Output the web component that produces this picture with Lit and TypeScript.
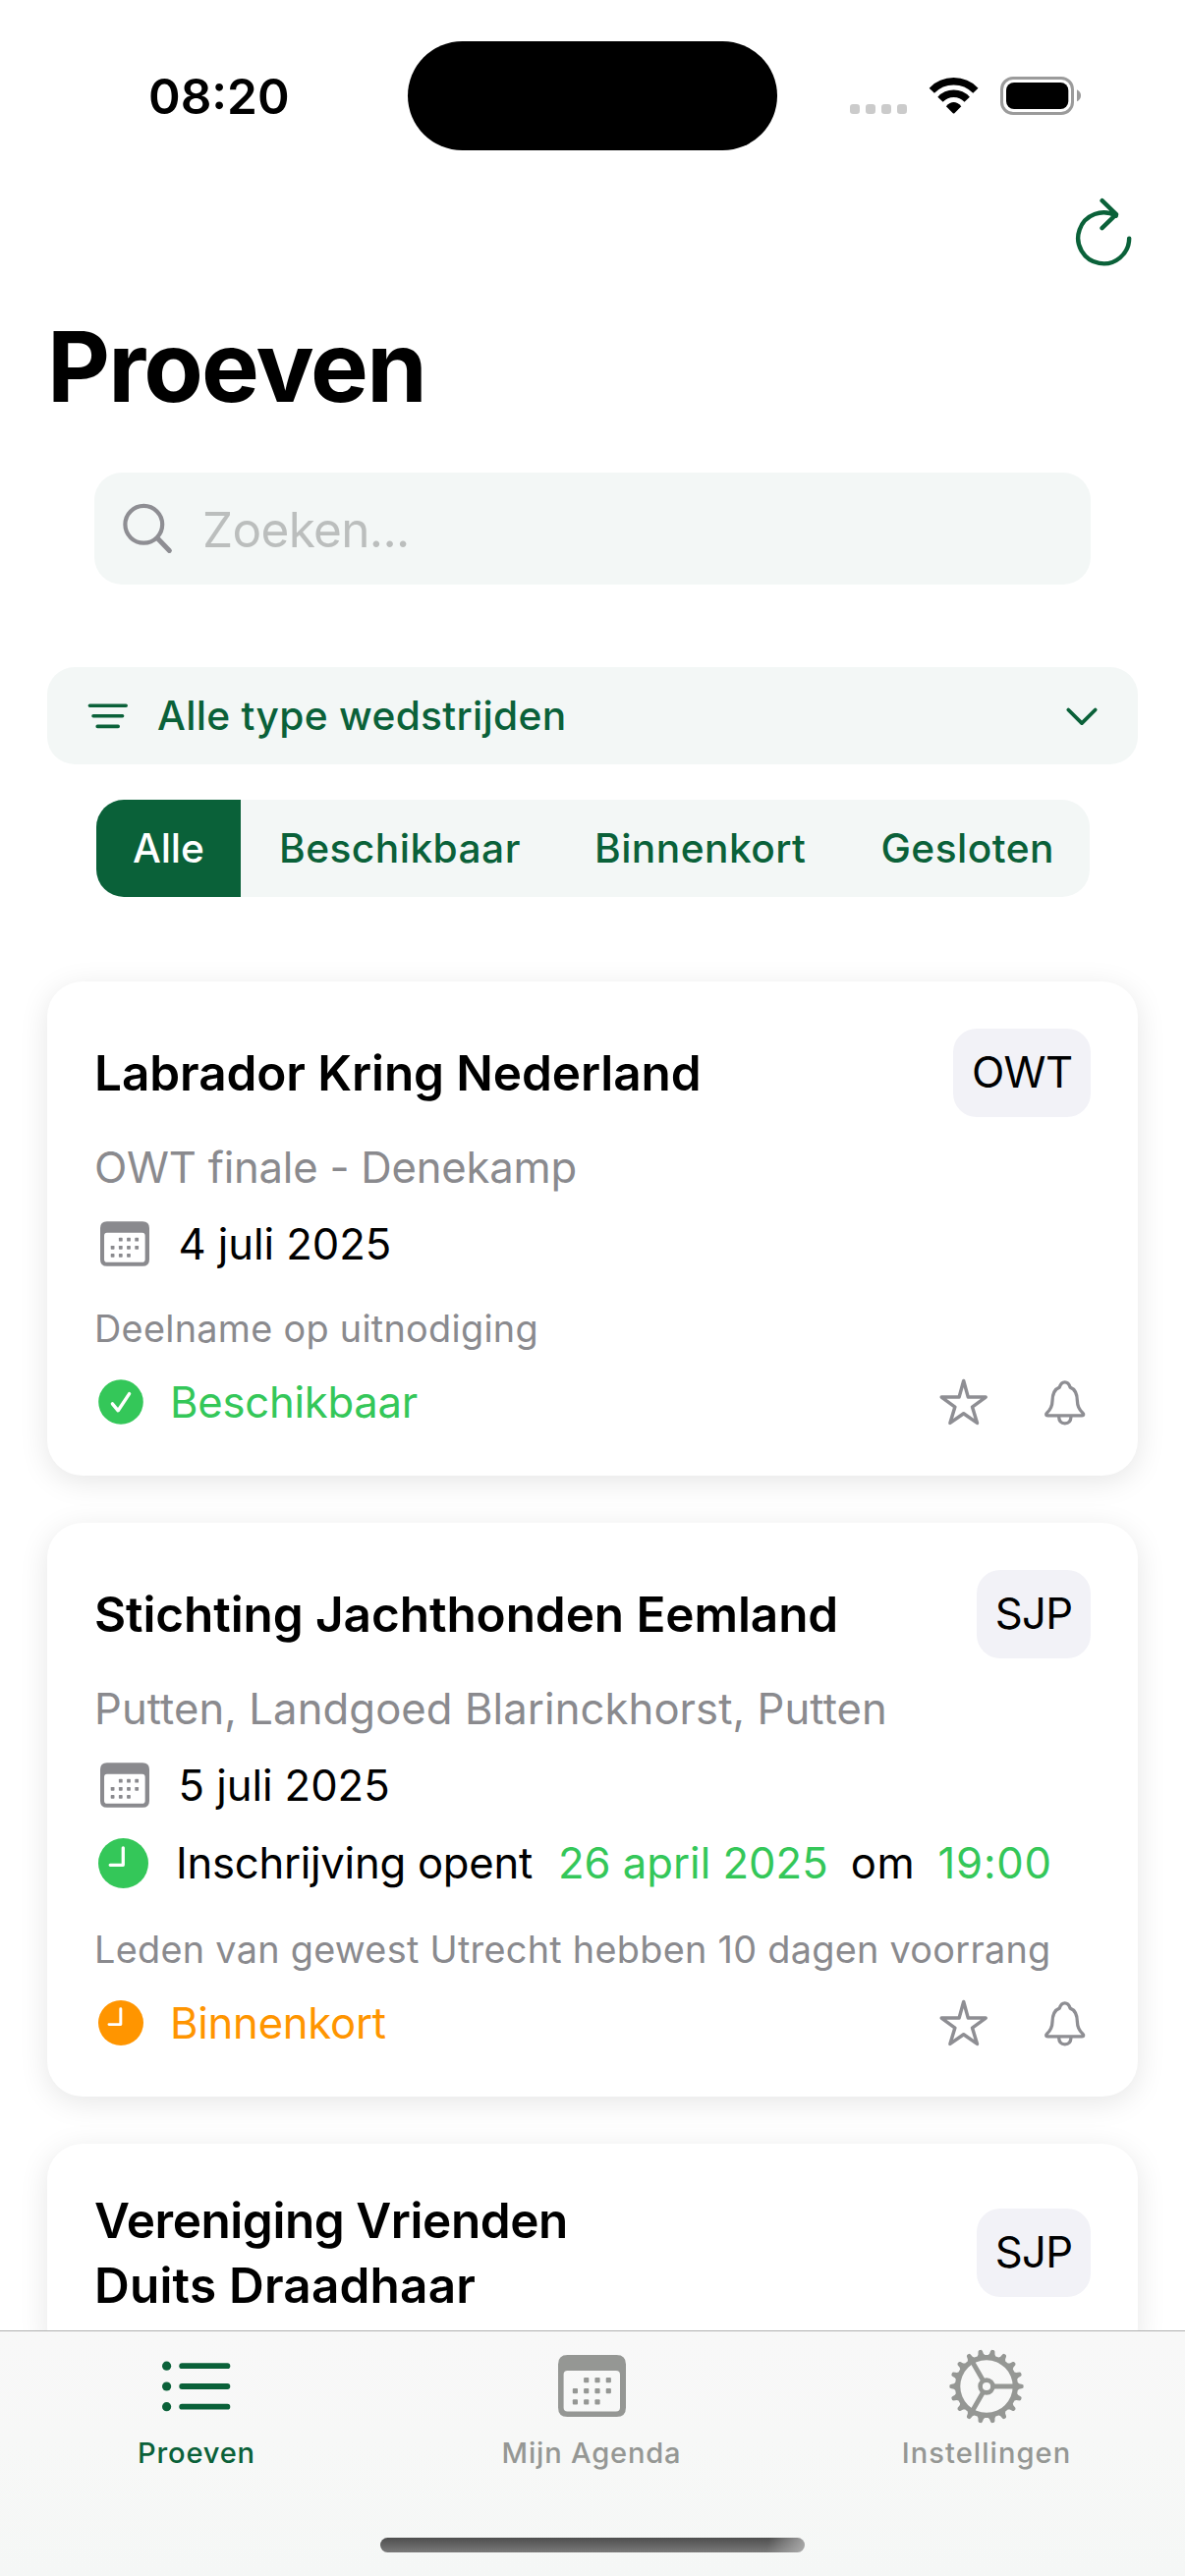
import { LitElement, html, css, svg, nothing } from "lit";
import { customElement, property, state } from "lit/decorators.js";
import { classMap } from "lit/directives/class-map.js";

type Status = "available" | "soon";

interface Trial {
  title: string[];
  kind: string;
  place?: string;
  date?: string;
  opens?: { day: string; time: string };
  note?: string;
  status?: Status;
}

const TRIALS: Trial[] = [
  {
    title: ["Labrador Kring Nederland"],
    kind: "OWT",
    place: "OWT finale - Denekamp",
    date: "4 juli 2025",
    note: "Deelname op uitnodiging",
    status: "available",
  },
  {
    title: ["Stichting Jachthonden Eemland"],
    kind: "SJP",
    place: "Putten, Landgoed Blarinckhorst, Putten",
    date: "5 juli 2025",
    opens: { day: "26 april 2025", time: "19:00" },
    note: "Leden van gewest Utrecht hebben 10 dagen voorrang",
    status: "soon",
  },
  { title: ["Vereniging Vrienden", "Duits Draadhaar"], kind: "SJP" },
];

const STATUS_LABEL: Record<Status, string> = {
  available: "Beschikbaar",
  soon: "Binnenkort",
};

const CALENDAR_DOTS: [number, number][] = [
  [1, 0], [2, 0], [3, 0],
  [0, 1], [1, 1], [2, 1], [3, 1],
  [0, 2], [1, 2], [2, 2],
];

const calendarIcon = (cls: string) => html`
  <svg class=${cls} viewBox="0 0 69 63">
    <path
      fill="currentColor"
      fill-rule="evenodd"
      d="M9.5 0H59.5Q69 0 69 9.5V53.5Q69 63 59.5 63H9.5Q0 63 0 53.5V9.5Q0 0 9.5 0ZM9.5 16Q5.6 16 5.6 20V53.5Q5.6 57.4 9.5 57.4H59Q63 57.4 63 53.5V20Q63 16 59 16Z"
    />
    ${CALENDAR_DOTS.map(
      ([c, r]) => svg`<rect x=${14.8 + c * 11.3} y=${23 + r * 11.1} width="5.2" height="5.2" rx="1" fill="currentColor" />`,
    )}
  </svg>
`;

/** Outline of the toothed rim, 18 teeth, centred on the origin. */
const gearOutline = (() => {
  const pts: string[] = [];
  const at = (r: number, deg: number) => {
    const a = (deg * Math.PI) / 180;
    pts.push(`${(r * Math.cos(a)).toFixed(2)} ${(r * Math.sin(a)).toFixed(2)}`);
  };
  for (let i = 0; i < 18; i++) {
    const a = i * 20;
    at(32, a - 7);
    at(33.4, a - 4.8);
    at(36.6, a - 3.3);
    at(37.6, a - 1.8);
    at(37.6, a + 1.8);
    at(36.6, a + 3.3);
    at(33.4, a + 4.8);
    at(32, a + 7);
  }
  return `M${pts.join("L")}Z`;
})();

const gearIcon = html`
  <svg class="icon-gear" viewBox="-38 -38 76 76">
    <path
      fill="currentColor"
      fill-rule="evenodd"
      d="${gearOutline}M26.7 0A26.7 26.7 0 1 0 -26.7 0A26.7 26.7 0 1 0 26.7 0Z"
    />
    <circle r="6.4" fill="none" stroke="currentColor" stroke-width="4.6" />
    <path
      fill="none"
      stroke="currentColor"
      stroke-width="4.8"
      d="M7 0H28M-3.5 -6.06L-14 -24.25M-3.5 6.06L-14 24.25"
    />
  </svg>
`;

const listIcon = html`
  <svg class="icon-list" viewBox="0 0 70 52" fill="currentColor">
    ${[5.2, 26, 46.7].map(
      (y) => svg`<circle cx="4.6" cy=${y} r="4.6" /><rect x="17.3" y=${y - 2.9} width="52" height="5.8" rx="2.9" />`,
    )}
  </svg>
`;

const clockIcon = (cls: string) => html`
  <svg class=${cls} viewBox="0 0 51 51">
    <circle cx="25.5" cy="25.5" r="25.5" fill="currentColor" />
    <path
      d="M25.3 9.8V27.3H12.2"
      fill="none"
      stroke="#fff"
      stroke-width="3.3"
      stroke-linecap="round"
      stroke-linejoin="round"
    />
  </svg>
`;

const checkIcon = html`
  <svg class="icon-state" viewBox="0 0 46 46">
    <circle cx="23" cy="23" r="22.8" fill="currentColor" />
    <path
      d="M14.4 24.8L20.2 31.8L31.6 14.6"
      fill="none"
      stroke="#fff"
      stroke-width="3.4"
      stroke-linecap="round"
      stroke-linejoin="round"
    />
  </svg>
`;

const starIcon = html`
  <svg class="icon-star" viewBox="26 22.5 50 48">
    <path
      d="M50.7 25L46.1 41.6L28.2 41.6L41.9 51.6L36.9 67.9L50.7 58.2L64.5 67.9L59.5 51.6L73.2 41.6L55.3 41.6Z"
      fill="none"
      stroke="currentColor"
      stroke-width="3.5"
      stroke-linejoin="round"
    />
  </svg>
`;

const bellIcon = html`
  <svg class="icon-bell" viewBox="132 22.5 44 48">
    <path
      d="M136.3 60.3C134.3 60.3 134.2 58.7 135.6 57.5C139 54.4 140.9 51.8 141 45.5C141.1 38.6 142.4 33.8 148.3 31.6C149.4 28 151 26.3 153.7 26.3C156.4 26.3 158 28 159.1 31.6C165 33.8 166.3 38.6 166.4 45.5C166.5 51.8 168.4 54.4 171.8 57.5C173.2 58.7 173.1 60.3 171.1 60.3ZM147.6 61.5C147.8 66 150.4 68.3 153.8 68.3C157.2 68.3 159.8 66 160 61.5"
      fill="none"
      stroke="currentColor"
      stroke-width="3.3"
      stroke-linejoin="round"
    />
  </svg>
`;

@customElement("status-bar")
class StatusBar extends LitElement {
  static styles = css`
    :host {
      display: flex;
      align-items: center;
      height: 194px;
    }
    .time {
      box-sizing: border-box;
      width: 415px;
      padding: 2px 0 0 151px;
      font-size: 49.5px;
      font-weight: 600;
      line-height: 60px;
    }
    .island {
      width: 376px;
      height: 111px;
      border-radius: 55.5px;
      background: #000;
    }
    .signals {
      width: 236px;
      height: 40px;
      margin: 2px 0 0 74px;
    }
  `;

  render() {
    return html`
      <div class="time">08:20</div>
      <div class="island"></div>
      <svg class="signals" viewBox="15 18 236 40">
        ${[15, 31, 47, 63].map(
          (x) => svg`<rect x=${x} y="46" width="10" height="10" rx="3.2" fill="#cbcbcb" />`,
        )}
        <path
          d="M98.3 32.2A31 31 0 0 1 142.9 32.2M107 41.2A18.5 18.5 0 0 1 134.2 41.2"
          fill="none"
          stroke="#000"
          stroke-width="7.3"
        />
        <path d="M112.9 48.2Q120.6 40 128.3 48.2L121.4 55.2Q120.6 56 119.8 55.2Z" fill="#000" />
        <rect x="169.5" y="19.5" width="72" height="36" rx="11.5" fill="none" stroke="#9b9b9b" stroke-width="3" />
        <rect x="174" y="24" width="63.3" height="27" rx="8" fill="#000" />
        <path d="M246 31.3Q250 33.4 250 37.2Q250 41.2 246 43.3Z" fill="#9b9b9b" />
      </svg>
    `;
  }
}

@customElement("trial-card")
class TrialCard extends LitElement {
  @property({ attribute: false }) trial!: Trial;

  static styles = css`
    :host {
      display: block;
      padding: 48px;
      border-radius: 36px;
      background: #fff;
      box-shadow: 0 6px 30px rgba(0, 0, 0, 0.1);
    }
    svg {
      display: block;
      flex: none;
    }
    .head {
      display: flex;
      align-items: center;
      justify-content: space-between;
    }
    .title {
      margin: -3px 0;
      font-size: 49.5px;
      font-weight: 600;
      line-height: 66px;
      letter-spacing: -0.09px;
      white-space: nowrap;
    }
    .title.wrapped {
      letter-spacing: -0.44px;
    }
    .title.wrapped .line + .line {
      letter-spacing: 0.2px;
    }
    .kind {
      padding: 0 18.6px;
      border-radius: 24px;
      background: #f2f2f7;
      font-size: 43.6px;
      line-height: 90px;
      letter-spacing: -0.65px;
    }
    .place {
      margin: 25px 0 -1px;
      color: #8a8a8e;
      font-size: 43.6px;
      line-height: 54px;
      letter-spacing: 0.09px;
    }
    .place.short {
      letter-spacing: -0.22px;
    }
    .date {
      display: flex;
      align-items: center;
      gap: 29.5px;
      height: 54px;
      margin-top: 24px;
      padding-left: 6px;
      font-size: 43.6px;
      letter-spacing: -0.05px;
    }
    .icon-calendar {
      width: 50px;
      height: 46px;
      color: #8a8a8e;
    }
    .opens {
      display: flex;
      align-items: center;
      gap: 23px;
      height: 57px;
      margin-top: 24px;
      padding-left: 4px;
      font-size: 43.6px;
      white-space: nowrap;
    }
    .icon-clock {
      width: 51px;
      height: 51px;
      margin-right: 5px;
      color: #34c759;
    }
    .opens-label {
      padding-right: 3px;
      letter-spacing: -0.25px;
    }
    .opens-value {
      color: #34c759;
      letter-spacing: 0;
    }
    .opens-value.clock {
      letter-spacing: 0.8px;
    }
    .opens-joint {
      letter-spacing: 0.8px;
    }
    .note {
      margin-top: 36px;
      color: #8a8a8e;
      font-size: 37.8px;
      line-height: 47px;
      letter-spacing: 0.29px;
      white-space: nowrap;
    }
    .foot {
      display: flex;
      align-items: center;
      height: 54px;
      margin-top: 24px;
      padding: 0 4px 0 3.5px;
    }
    .state {
      display: flex;
      align-items: center;
      gap: 27.5px;
      flex: 1;
      font-size: 43.6px;
      letter-spacing: -0.24px;
    }
    .state.available {
      color: #34c759;
    }
    .state.soon {
      color: #ff9500;
    }
    .icon-state {
      width: 46px;
      height: 46px;
    }
    .icon-star {
      width: 50px;
      height: 48px;
      margin: 0 56px 1px 0;
      color: #8e8e93;
    }
    .icon-bell {
      width: 44px;
      height: 48px;
      margin-bottom: 1px;
      color: #8e8e93;
    }
  `;

  render() {
    const t = this.trial;
    return html`
      <div class="head">
        <div class=${classMap({ title: true, wrapped: t.title.length > 1 })}>
          ${t.title.map((line) => html`<div class="line">${line}</div>`)}
        </div>
        <div class="kind">${t.kind}</div>
      </div>
      ${t.place
        ? html`<div class=${classMap({ place: true, short: t.place.length < 30 })}>${t.place}</div>`
        : nothing}
      ${t.date ? html`<div class="date">${calendarIcon("icon-calendar")}<span>${t.date}</span></div>` : nothing}
      ${t.opens
        ? html`<div class="opens">
            ${clockIcon("icon-clock")}
            <span class="opens-label">Inschrijving opent</span>
            <span class="opens-value">${t.opens.day}</span>
            <span class="opens-joint">om</span>
            <span class="opens-value clock">${t.opens.time}</span>
          </div>`
        : nothing}
      ${t.note ? html`<div class="note">${t.note}</div>` : nothing}
      ${t.status
        ? html`<div class="foot">
            <div class="state ${t.status}">
              ${t.status === "available" ? checkIcon : clockIcon("icon-state")}
              <span>${STATUS_LABEL[t.status]}</span>
            </div>
            ${starIcon} ${bellIcon}
          </div>`
        : nothing}
    `;
  }
}

@customElement("tab-bar")
class TabBar extends LitElement {
  static styles = css`
    :host {
      display: flex;
      flex-direction: column;
      align-items: center;
      box-sizing: border-box;
      height: 250px;
      border-top: 1px solid #b0b0b0;
      background: linear-gradient(#f8f8f8, #f7f8f7 45%, #f5f7f6);
    }
    svg {
      display: block;
    }
    .tabs {
      display: grid;
      grid-template-columns: repeat(3, 1fr);
      align-self: stretch;
      padding-top: 18px;
    }
    .tab {
      display: flex;
      flex-direction: column;
      align-items: center;
      gap: 12px;
      padding-right: 2px;
      color: #959794;
      font-size: 29.1px;
      font-weight: 500;
      line-height: 36px;
      letter-spacing: 0.8px;
    }
    .tab.active {
      color: #0a6139;
    }
    .tab.wide {
      letter-spacing: 1.05px;
    }
    .glyph {
      display: flex;
      align-items: center;
      height: 76px;
    }
    .icon-list {
      width: 70px;
      height: 52px;
    }
    .icon-calendar {
      width: 69px;
      height: 63px;
      margin-bottom: 1px;
    }
    .icon-gear {
      width: 76px;
      height: 76px;
      margin-bottom: 1px;
    }
    .handle {
      width: 432px;
      height: 15px;
      margin-top: 68px;
      border-radius: 7.5px;
      background:
        linear-gradient(100deg, rgba(180, 180, 180, 0) 91%, rgba(180, 180, 180, 0.85) 100%),
        linear-gradient(#4e4e4e, #7a7a7a);
    }
  `;

  render() {
    return html`
      <div class="tabs">
        <div class="tab active"><div class="glyph">${listIcon}</div><span>Proeven</span></div>
        <div class="tab"><div class="glyph">${calendarIcon("icon-calendar")}</div><span>Mijn Agenda</span></div>
        <div class="tab wide"><div class="glyph">${gearIcon}</div><span>Instellingen</span></div>
      </div>
      <div class="handle"></div>
    `;
  }
}

@customElement("app-root")
class AppRoot extends LitElement {
  @state() private filter = "Alle";

  static styles = css`
    :host {
      display: flex;
      flex-direction: column;
      width: 1206px;
      height: 2622px;
      overflow: hidden;
      background: #fff;
      color: #000;
      font-family: Inter, "Liberation Sans", sans-serif;
      font-kerning: normal;
    }
    svg {
      display: block;
      flex: none;
    }
    .screen {
      flex: 1;
      min-height: 0;
      overflow: hidden;
    }
    .toolbar {
      display: flex;
      justify-content: flex-end;
      box-sizing: border-box;
      height: 119px;
      padding: 2px 50px 0 0;
    }
    .icon-refresh {
      width: 66px;
      height: 80px;
    }
    .heading {
      margin: 0;
      padding-left: 48px;
      font-size: 98.9px;
      font-weight: 700;
      line-height: 120px;
      letter-spacing: -1.82px;
    }
    .search {
      display: flex;
      align-items: center;
      gap: 30px;
      box-sizing: border-box;
      height: 114px;
      margin: 48px 96px 0;
      padding-left: 28px;
      border-radius: 28px;
      background: #f3f7f6;
      color: #bbbebd;
      font-size: 49.5px;
      line-height: 62px;
      letter-spacing: -0.67px;
    }
    .icon-search {
      width: 52px;
      height: 52px;
    }
    .query {
      padding-top: 2px;
    }
    .types {
      display: flex;
      align-items: center;
      box-sizing: border-box;
      height: 99px;
      margin: 84px 48px 0;
      padding: 0 40px;
      border-radius: 28px;
      background: #f3f7f6;
      color: #0a6139;
      font-size: 40.7px;
      font-weight: 500;
      letter-spacing: 0.3px;
    }
    .types-label {
      flex: 1;
      padding-left: 30px;
    }
    .icon-lines {
      width: 42px;
      height: 30px;
    }
    .icon-chevron {
      width: 34px;
      height: 22px;
    }
    .segments {
      display: grid;
      grid-template-columns: 147px 321px 291.5px 251.5px;
      height: 99px;
      margin: 36px 97px 0 98px;
      border-radius: 28px;
      overflow: hidden;
      background: #f3f7f6;
      color: #0a6139;
      font-size: 40.7px;
      font-weight: 500;
      line-height: 99px;
      letter-spacing: 0.44px;
    }
    .segment {
      padding-left: 39px;
    }
    .segment.active {
      padding-left: 37px;
      background: #0a6139;
      color: #fff;
      letter-spacing: -0.12px;
    }
    .cards {
      display: flex;
      flex-direction: column;
      gap: 48px;
      margin: 86px 48px 0;
    }
  `;

  render() {
    return html`
      <div class="screen">
        <status-bar></status-bar>
        <div class="toolbar">
          <svg class="icon-refresh" viewBox="1090 196 66 80">
            <path
              d="M1149.2 242.6A26 26 0 1 1 1135.8 219.6M1121.6 204.2L1136 218.2L1121.6 232.2"
              fill="none"
              stroke="#0a6139"
              stroke-width="4.4"
              stroke-linecap="round"
              stroke-linejoin="round"
            />
          </svg>
        </div>
        <h1 class="heading">Proeven</h1>
        <div class="search">
          <svg class="icon-search" viewBox="124 512 52 52" fill="none" stroke="#8e8e93" stroke-linecap="round">
            <circle cx="146.3" cy="533.8" r="18.9" stroke-width="4.2" />
            <path d="M160.4 548L172.4 560.4" stroke-width="5" />
          </svg>
          <span class="query">Zoeken...</span>
        </div>
        <div class="types">
          <svg
            class="icon-lines"
            viewBox="88 714 42 30"
            fill="none"
            stroke="currentColor"
            stroke-width="3.6"
            stroke-linecap="round"
          >
            <path d="M91.4 718.2H128.2M95 728.8H124.6M99.2 739.4H120.2" />
          </svg>
          <span class="types-label">Alle type wedstrijden</span>
          <svg
            class="icon-chevron"
            viewBox="1084.5 717.5 34 22"
            fill="none"
            stroke="currentColor"
            stroke-width="3.8"
            stroke-linecap="round"
            stroke-linejoin="round"
          >
            <path d="M1087.8 722L1101.5 735.6L1115.2 722" />
          </svg>
        </div>
        <div class="segments">
          ${["Alle", "Beschikbaar", "Binnenkort", "Gesloten"].map(
            (name) => html`<div
              class=${classMap({ segment: true, active: name === this.filter })}
              @click=${() => (this.filter = name)}
            >
              ${name}
            </div>`,
          )}
        </div>
        <div class="cards">${TRIALS.map((trial) => html`<trial-card .trial=${trial}></trial-card>`)}</div>
      </div>
      <tab-bar></tab-bar>
    `;
  }
}
